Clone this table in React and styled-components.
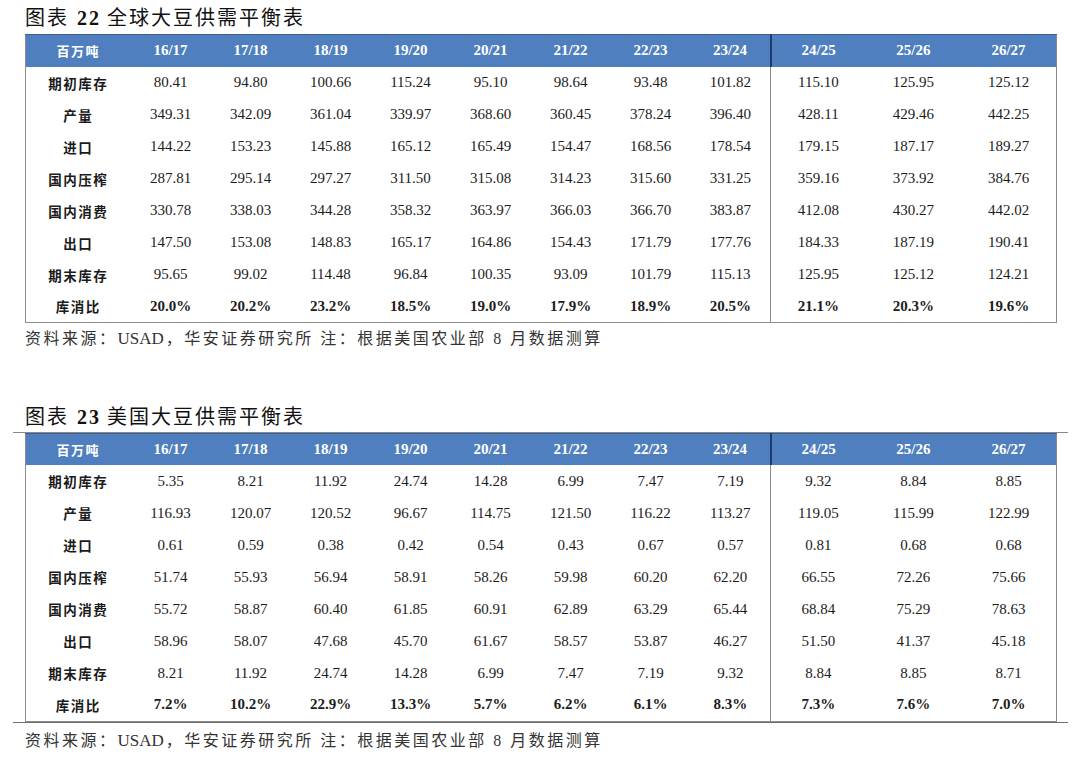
import React from "react";
import styled, { createGlobalStyle } from "styled-components";

const GlobalStyle = createGlobalStyle`
  html, body {
    margin: 0;
    padding: 0;
    background: #ffffff;
  }
  body {
    font-family: "Liberation Serif", "Noto Sans CJK SC", serif;
    color: #111;
  }
`;

const years = ["16/17", "17/18", "18/19", "19/20", "20/21", "21/22", "22/23", "23/24", "24/25", "25/26", "26/27"];

const worldRows = [
  ["期初库存", ["80.41", "94.80", "100.66", "115.24", "95.10", "98.64", "93.48", "101.82", "115.10", "125.95", "125.12"]],
  ["产量", ["349.31", "342.09", "361.04", "339.97", "368.60", "360.45", "378.24", "396.40", "428.11", "429.46", "442.25"]],
  ["进口", ["144.22", "153.23", "145.88", "165.12", "165.49", "154.47", "168.56", "178.54", "179.15", "187.17", "189.27"]],
  ["国内压榨", ["287.81", "295.14", "297.27", "311.50", "315.08", "314.23", "315.60", "331.25", "359.16", "373.92", "384.76"]],
  ["国内消费", ["330.78", "338.03", "344.28", "358.32", "363.97", "366.03", "366.70", "383.87", "412.08", "430.27", "442.02"]],
  ["出口", ["147.50", "153.08", "148.83", "165.17", "164.86", "154.43", "171.79", "177.76", "184.33", "187.19", "190.41"]],
  ["期末库存", ["95.65", "99.02", "114.48", "96.84", "100.35", "93.09", "101.79", "115.13", "125.95", "125.12", "124.21"]],
  ["库消比", ["20.0%", "20.2%", "23.2%", "18.5%", "19.0%", "17.9%", "18.9%", "20.5%", "21.1%", "20.3%", "19.6%"], true],
];

const usRows = [
  ["期初库存", ["5.35", "8.21", "11.92", "24.74", "14.28", "6.99", "7.47", "7.19", "9.32", "8.84", "8.85"]],
  ["产量", ["116.93", "120.07", "120.52", "96.67", "114.75", "121.50", "116.22", "113.27", "119.05", "115.99", "122.99"]],
  ["进口", ["0.61", "0.59", "0.38", "0.42", "0.54", "0.43", "0.67", "0.57", "0.81", "0.68", "0.68"]],
  ["国内压榨", ["51.74", "55.93", "56.94", "58.91", "58.26", "59.98", "60.20", "62.20", "66.55", "72.26", "75.66"]],
  ["国内消费", ["55.72", "58.87", "60.40", "61.85", "60.91", "62.89", "63.29", "65.44", "68.84", "75.29", "78.63"]],
  ["出口", ["58.96", "58.07", "47.68", "45.70", "61.67", "58.57", "53.87", "46.27", "51.50", "41.37", "45.18"]],
  ["期末库存", ["8.21", "11.92", "24.74", "14.28", "6.99", "7.47", "7.19", "9.32", "8.84", "8.85", "8.71"]],
  ["库消比", ["7.2%", "10.2%", "22.9%", "13.3%", "5.7%", "6.2%", "6.1%", "8.3%", "7.3%", "7.6%", "7.0%"], true],
];

const Page = styled.div`
  width: 1080px;
  padding: 4px 0 0 25px;
  box-sizing: border-box;
`;

const Section = styled.section`
  margin-top: ${(p) => p.$gap}px;
`;

const Title = styled.h2`
  margin: 0 0 2px;
  height: 28px;
  line-height: 28px;
  font-size: 20px;
  font-weight: 400;
  letter-spacing: 2px;
  color: #111;
  font-family: "Liberation Serif", "Noto Sans CJK SC", serif;

  b {
    font-weight: 700;
    margin: 0 6px 0 8px;
  }
`;

const Frame = styled.div`
  width: 1031px;
  ${(p) =>
    p.$ruled &&
    `
    margin-left: -12px;
    padding: 0 12px;
    border-top: 1.5px solid #8a8a8a;
    border-bottom: 1.5px solid #6e6e6e;
    margin-top: -1.5px;
  `}
`;

const Table = styled.table`
  width: 1031px;
  border-collapse: collapse;
  table-layout: fixed;
  border-left: 1.5px solid #8c8c8c;
  border-right: 1.5px solid #8c8c8c;
  border-bottom: 1.5px solid #8c8c8c;
`;

const HeadRow = styled.tr`
  background: #4f7fbe;
  height: 32px;
  border-top: 1.5px solid #3a5f90;
`;

const HeadCell = styled.th`
  color: #ffffff;
  font-size: ${(p) => (p.$unit ? 13 : 15)}px;
  letter-spacing: ${(p) => (p.$unit ? 1.5 : 0)}px;
  font-weight: 700;
  font-family: "Liberation Serif", "Noto Sans CJK SC", serif;
  text-align: center;
  padding: 0;
  border-right: ${(p) => (p.$split ? "2px solid #1f3d6b" : "none")};
`;

const BodyRow = styled.tr`
  height: 32px;
`;

const Label = styled.td`
  text-align: center;
  font-size: 13.5px;
  font-weight: 700;
  letter-spacing: 1.5px;
  font-family: "Noto Sans CJK SC", sans-serif;
  color: #1a1a1a;
  padding: 0;
`;

const Cell = styled.td`
  text-align: center;
  font-size: 15px;
  font-weight: ${(p) => (p.$bold ? 700 : 400)};
  color: #1c1c1c;
  padding: 0;
  border-right: ${(p) => (p.$split ? "1.5px solid #8c8c8c" : "none")};
`;

const Source = styled.p`
  margin: ${(p) => p.$top}px 0 0;
  height: 20px;
  line-height: 20px;
  font-size: 16px;
  color: #333;
  letter-spacing: 2.5px;
  font-family: "Liberation Serif", "Noto Sans CJK SC", serif;

  span {
    letter-spacing: 0;
    font-size: 17px;
    margin-right: 2px;
  }
`;

const widths = [105, 80, 80, 80, 80, 80, 80, 80, 80, 95.3, 95.3, 95.4];

function BalanceTable({ rows }) {
  return (
    <Table>
      <colgroup>
        {widths.map((w, i) => (
          <col key={i} style={{ width: w }} />
        ))}
      </colgroup>
      <thead>
        <HeadRow>
          <HeadCell $unit>百万吨</HeadCell>
          {years.map((y, i) => (
            <HeadCell key={y} $split={i === 7}>
              {y}
            </HeadCell>
          ))}
        </HeadRow>
      </thead>
      <tbody>
        {rows.map(([label, values, bold]) => (
          <BodyRow key={label}>
            <Label>{label}</Label>
            {values.map((v, i) => (
              <Cell key={i} $bold={bold} $split={i === 7}>
                {v}
              </Cell>
            ))}
          </BodyRow>
        ))}
      </tbody>
    </Table>
  );
}

function SourceNote({ top }) {
  return (
    <Source $top={top}>
      资料来源：<span>USAD</span>，华安证券研究所 注：根据美国农业部 8 月数据测算
    </Source>
  );
}

export default function App() {
  return (
    <Page>
      <GlobalStyle />
      <Section $gap={0}>
        <Title>
          图表<b>22</b>全球大豆供需平衡表
        </Title>
        <Frame>
          <BalanceTable rows={worldRows} />
        </Frame>
        <SourceNote top={6} />
      </Section>
      <Section $gap={54}>
        <Title>
          图表<b>23</b>美国大豆供需平衡表
        </Title>
        <Frame $ruled>
          <BalanceTable rows={usRows} />
        </Frame>
        <SourceNote top={8} />
      </Section>
    </Page>
  );
}
